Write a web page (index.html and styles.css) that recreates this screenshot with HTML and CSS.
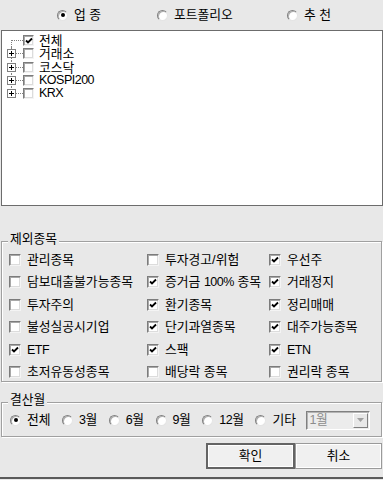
FILE: index.html
```html
<!DOCTYPE html>
<html lang="ko">

<head>
    <meta charset="UTF-8">
    <meta name="viewport" content="width=device-width, initial-scale=1.0">
    <title>종목 선택</title>
    <link rel="stylesheet" href="styles.css">
</head>

<body>
    <div class="dialog">
        <div class="view-tabs">
            <label class="opt opt-sector"><span class="radio on"></span>업 종</label>
            <label class="opt opt-folio"><span class="radio"></span>포트폴리오</label>
            <label class="opt"><span class="radio"></span>추 천</label>
        </div>

        <div class="tree">
            <div class="tree-row first">
                <span class="branch"></span>
                <span class="check small on"><svg viewBox="0 0 8 8"><polyline points="1,3.5 3,5.5 7,1.5"/></svg></span>
                <span class="tree-label">전체</span>
            </div>
            <div class="tree-row">
                <span class="branch"><span class="plus"></span></span>
                <span class="check small"></span>
                <span class="tree-label">거래소</span>
            </div>
            <div class="tree-row">
                <span class="branch"><span class="plus"></span></span>
                <span class="check small"></span>
                <span class="tree-label">코스닥</span>
            </div>
            <div class="tree-row">
                <span class="branch"><span class="plus"></span></span>
                <span class="check small"></span>
                <span class="tree-label en">KOSPI200</span>
            </div>
            <div class="tree-row last">
                <span class="branch"><span class="plus"></span></span>
                <span class="check small"></span>
                <span class="tree-label en">KRX</span>
            </div>
        </div>

        <div class="group exclude">
            <div class="group-title">제외종목</div>
            <div class="check-grid">
                <label class="item"><span class="check"></span>관리종목</label>
                <label class="item"><span class="check"></span>투자경고/위험</label>
                <label class="item"><span class="check on"><svg viewBox="0 0 8 8"><polyline points="1,3.5 3,5.5 7,1.5"/></svg></span>우선주</label>

                <label class="item"><span class="check"></span>담보대출불가능종목</label>
                <label class="item"><span class="check on"><svg viewBox="0 0 8 8"><polyline points="1,3.5 3,5.5 7,1.5"/></svg></span><span>증거금 <span class="en">100%</span> 종목</span></label>
                <label class="item"><span class="check on"><svg viewBox="0 0 8 8"><polyline points="1,3.5 3,5.5 7,1.5"/></svg></span>거래정지</label>

                <label class="item"><span class="check"></span>투자주의</label>
                <label class="item"><span class="check on"><svg viewBox="0 0 8 8"><polyline points="1,3.5 3,5.5 7,1.5"/></svg></span>환기종목</label>
                <label class="item"><span class="check on"><svg viewBox="0 0 8 8"><polyline points="1,3.5 3,5.5 7,1.5"/></svg></span>정리매매</label>

                <label class="item"><span class="check"></span>불성실공시기업</label>
                <label class="item"><span class="check on"><svg viewBox="0 0 8 8"><polyline points="1,3.5 3,5.5 7,1.5"/></svg></span>단기과열종목</label>
                <label class="item"><span class="check on"><svg viewBox="0 0 8 8"><polyline points="1,3.5 3,5.5 7,1.5"/></svg></span>대주가능종목</label>

                <label class="item"><span class="check on"><svg viewBox="0 0 8 8"><polyline points="1,3.5 3,5.5 7,1.5"/></svg></span><span class="en">ETF</span></label>
                <label class="item"><span class="check on"><svg viewBox="0 0 8 8"><polyline points="1,3.5 3,5.5 7,1.5"/></svg></span>스팩</label>
                <label class="item"><span class="check on"><svg viewBox="0 0 8 8"><polyline points="1,3.5 3,5.5 7,1.5"/></svg></span><span class="en">ETN</span></label>

                <label class="item"><span class="check"></span>초저유동성종목</label>
                <label class="item"><span class="check"></span>배당락 종목</label>
                <label class="item"><span class="check"></span>권리락 종목</label>
            </div>
        </div>

        <div class="group settle">
            <div class="group-title">결산월</div>
            <div class="month-row">
                <label class="opt"><span class="radio on"></span>전체</label>
                <label class="opt"><span class="radio"></span><span><span class="en">3</span>월</span></label>
                <label class="opt"><span class="radio"></span><span><span class="en">6</span>월</span></label>
                <label class="opt"><span class="radio"></span><span><span class="en">9</span>월</span></label>
                <label class="opt"><span class="radio"></span><span><span class="en">12</span>월</span></label>
                <label class="opt"><span class="radio"></span>기타</label>
                <div class="select">
                    <span class="select-value"><span class="en">1</span>월</span>
                    <span class="select-btn"><svg viewBox="0 0 7 4"><polygon points="0,0 7,0 3.5,4"/></svg></span>
                </div>
            </div>
        </div>

        <div class="actions">
            <button class="btn default">확인</button>
            <button class="btn">취소</button>
        </div>
        <div class="status-line"></div>
    </div>
</body>

</html>
```

FILE: styles.css
```css
body {
    margin: 0;
    background-color: #e8e8e8;
    font-family: "Liberation Sans", "Noto Sans CJK KR", sans-serif;
    font-size: 12.8px;
    line-height: 14px;
    color: #000;
}

.dialog {
    width: 383px;
    height: 480px;
    overflow: hidden;
}

/* latin text is narrower in the original font */
.en {
    font-size: 12.5px;
    letter-spacing: -0.5px;
}

/* radio */
.opt {
    display: flex;
    align-items: center;
    gap: 6px;
    white-space: nowrap;
}

.radio {
    flex: none;
    box-sizing: border-box;
    width: 11px;
    height: 11px;
    border-radius: 50%;
    background: #fff;
    border: 1px solid;
    border-color: #808080 #e4e4e4 #e4e4e4 #808080;
    box-shadow: inset 1px 1px 0 #b0b0b0;
    display: flex;
    align-items: center;
    justify-content: center;
}

.radio.on::after {
    content: "";
    width: 4px;
    height: 4px;
    border-radius: 50%;
    background: #000;
}

/* checkbox */
.check {
    flex: none;
    box-sizing: border-box;
    width: 12px;
    height: 12px;
    background: #fff;
    border: 1px solid;
    border-color: #7c7c7c #f4f4f4 #f4f4f4 #7c7c7c;
    box-shadow: inset 1px 1px 0 #a8a8a8, inset -1px -1px 0 #dcdcdc;
    display: flex;
    align-items: center;
    justify-content: center;
}

.check.small {
    width: 11px;
    height: 11px;
}

.check svg {
    width: 8px;
    height: 8px;
}

.check polyline {
    fill: none;
    stroke: #000;
    stroke-width: 1.8;
}

/* top tabs */
.view-tabs {
    display: flex;
    align-items: center;
    height: 14px;
    padding: 8px 0 0 57px;
}

.opt-sector {
    width: 100px;
}

.opt-folio {
    width: 130px;
}

/* tree */
.tree {
    box-sizing: border-box;
    margin: 8px 0 0 1px;
    width: 382px;
    height: 176px;
    padding-top: 3px;
    background: #fff;
    border: 1px solid #6c6c6c;
}

.tree-row {
    display: flex;
    align-items: center;
    height: 13.3px;
    line-height: 13px;
}

.branch {
    flex: none;
    position: relative;
    width: 21px;
    height: 100%;
}

.branch::before {
    content: "";
    position: absolute;
    left: 9px;
    top: 0;
    bottom: 0;
    border-left: 1px dotted #808080;
}

.tree-row.first .branch::before {
    top: 6px;
}

.tree-row.last .branch::before {
    bottom: 6px;
}

.branch::after {
    content: "";
    position: absolute;
    left: 14px;
    top: 6px;
    width: 7px;
    border-top: 1px dotted #808080;
}

.tree-row.first .branch::after {
    left: 10px;
    width: 11px;
}

.plus {
    position: absolute;
    z-index: 1;
    left: 5px;
    top: 2px;
    box-sizing: border-box;
    width: 9px;
    height: 9px;
    border: 1px solid #808080;
    background:
        linear-gradient(#000, #000) center / 5px 1px no-repeat,
        linear-gradient(#000, #000) center / 1px 5px no-repeat,
        #fff;
}

.tree-label {
    margin-left: 5px;
}

/* group boxes */
.group {
    box-sizing: border-box;
    margin: 0 1px 0 1px;
    border: 1px solid #a0a0a0;
    box-shadow: inset 1px 1px 0 #fff, 1px 1px 0 #fff;
}

.group-title {
    width: max-content;
    height: 14px;
    margin: -10px 0 0 0;
    padding: 0 2px;
    background: #e8e8e8;
}

.exclude {
    margin-top: 35px;
    padding: 0 0 1px 7px;
}

.exclude .group-title {
    margin-left: -1px;
}

.check-grid {
    display: grid;
    grid-template-columns: 138px 122px 1fr;
    grid-auto-rows: 16px;
    row-gap: 6.6px;
    margin-top: 5.5px;
}

.item {
    display: flex;
    align-items: center;
    gap: 6px;
    white-space: nowrap;
}

.settle {
    margin-top: 20px;
    padding: 0 0 7px 8px;
}

.settle .group-title {
    margin-left: -2px;
}

.month-row {
    display: flex;
    align-items: center;
    gap: 11.5px;
    height: 18px;
    margin-top: 4px;
}

.select {
    box-sizing: border-box;
    display: flex;
    align-items: center;
    justify-content: space-between;
    width: 64px;
    height: 19px;
    margin-left: -1px;
    padding: 0 1px 0 2px;
    border: 1px solid;
    border-color: #808080 #fff #fff #808080;
    box-shadow: inset 1px 1px 0 #b4b4b4;
    background: #ececec;
}

.select-value {
    color: #8c8c8c;
}

.select-btn {
    box-sizing: border-box;
    display: flex;
    align-items: center;
    justify-content: center;
    width: 15px;
    height: 15px;
    border: 1px solid;
    border-color: #fff #808080 #808080 #fff;
    background: #e8e8e8;
}

.select-btn svg {
    width: 7px;
    height: 4px;
    fill: #a0a0a0;
}

/* buttons */
.actions {
    display: flex;
    justify-content: flex-end;
    margin-top: 6px;
    padding-right: 1px;
}

.btn {
    box-sizing: border-box;
    width: 87px;
    height: 26px;
    padding: 0;
    font: inherit;
    background: #f0f0f0;
    border: 1px solid #9a9a9a;
    box-shadow: inset 1px 1px 0 #fff, inset -1px -1px 0 #fff;
    color: #000;
}

.btn.default {
    width: 89px;
    border: 2px solid #646464;
}

.status-line {
    margin-top: 8px;
    height: 2px;
    background: #5a5a5a;
}
```
